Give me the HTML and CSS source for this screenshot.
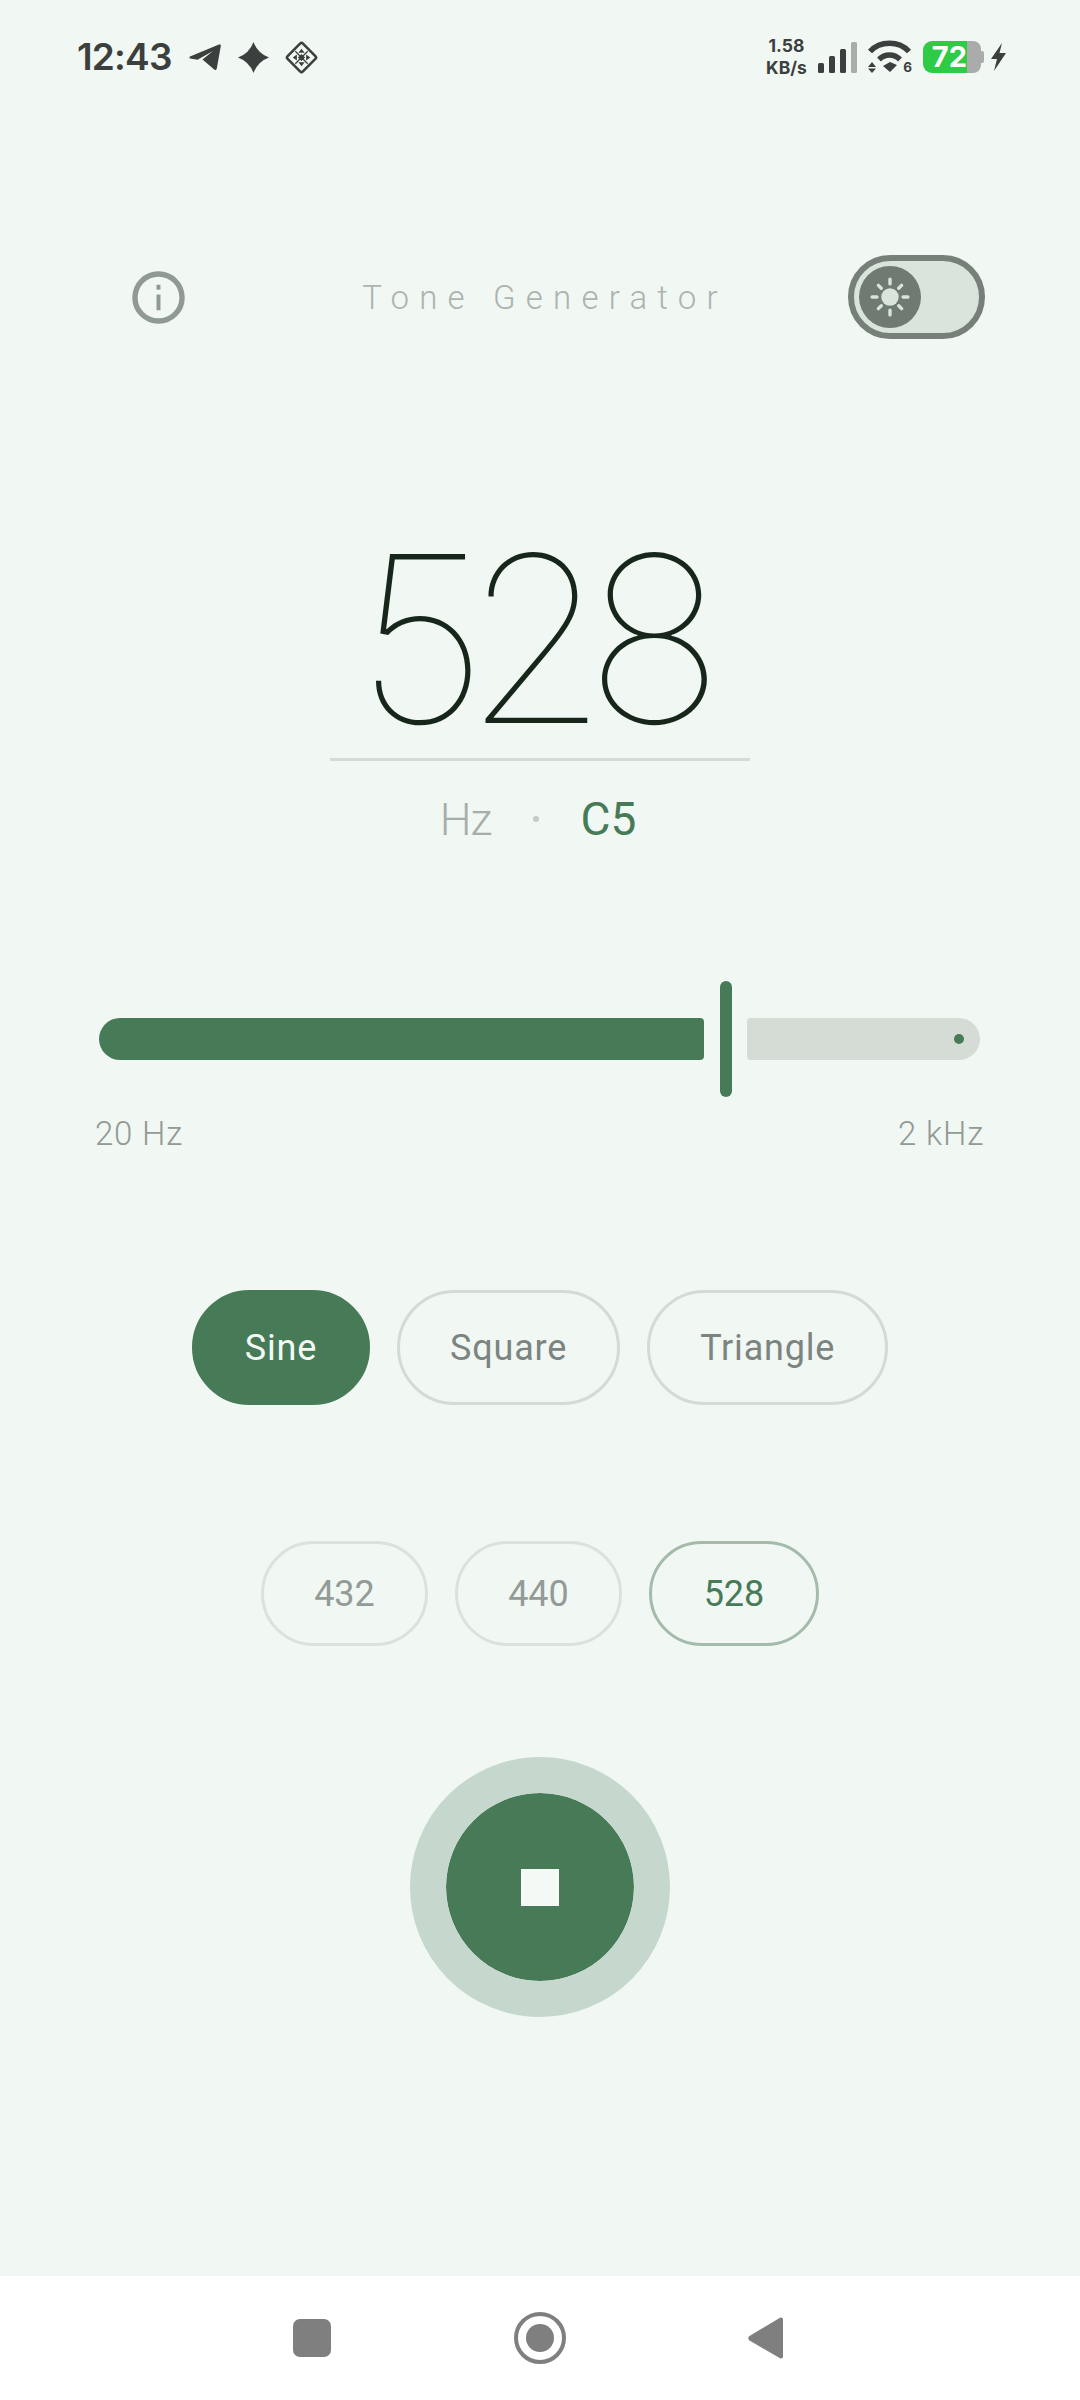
FILE: index.html
```html
<!DOCTYPE html>
<html lang="en">
<head>
<meta charset="utf-8">
<title>Tone Generator</title>
<link rel="stylesheet" href="styles.css">
</head>
<body>
<div class="screen">
  <header class="status">
    <div class="status-left">
      <span class="time">12:43</span>
      <svg class="ic-plane" viewBox="0 0 32 26"><path d="M1 12.500 30 .6c1.200-.5 2 .2 1.800 1.400L27.800 24.500c-.3 1.500-1.500 1.800-2.600.9L13.500 15.500 24 7 8.500 15.800 1.200 14.500c-.9-.2-1-1.500-.2-2Z"/></svg>
      <svg class="ic-star" viewBox="0 0 30 30"><path d="M15 0Q19 11 30 15 19 19 15 30 11 19 0 15 11 11 15 0Z"/></svg>
      <svg class="ic-diamond" viewBox="0 0 32 32"><rect x="5.500" y="5.500" width="21" height="21" rx="2" transform="rotate(45 16 16)" class="dia-line"/><path d="M16 7.500l3 4h-6ZM16 24.500l-3-4h6ZM7.500 16l4-3v6ZM24.500 16l-4 3v-6ZM16 12.500l3.500 3.500-3.500 3.500-3.500-3.500Z"/><path class="dia-thin" d="M10 10l12 12M22 10 10 22"/></svg>
    </div>
    <div class="status-right">
      <div class="speed"><span>1.58</span><span>KB/s</span></div>
      <div class="signal"><i class="b1"></i><i class="b2"></i><i class="b3"></i><i class="b4"></i></div>
      <div class="wifi">
        <svg viewBox="0 0 44 32"><path class="wifi-arc" d="M2 10.500C12 -.5 31 -.5 41 10.500"/><path class="wifi-arc" d="M11 18.500C17 12.500 26 12.500 32 18.500"/><path d="M15 25 22 21l7 3-7 7ZM0 26l4-5 4 5ZM0 27.500h8l-4 4.500Z"/></svg>
        <span class="wifi-six">6</span>
      </div>
      <div class="battery"><span class="bat-fill">72</span><span class="bat-rest"></span><span class="bat-nub"></span></div>
      <svg class="ic-bolt" viewBox="0 0 15 28"><path d="M11 0 0 16h6L3 28 15 10H8.500Z"/></svg>
    </div>
  </header>

  <main class="main">
    <section class="topbar">
      <svg class="ic-info" viewBox="0 0 54 54"><circle cx="27" cy="27" r="24" class="info-ring"/><rect x="25" y="14" width="4" height="5"/><rect x="25" y="24" width="4" height="16"/></svg>
      <h1 class="title">Tone Generator</h1>
      <div class="toggle">
        <div class="thumb">
          <svg viewBox="0 0 64 64" class="ic-sun"><circle cx="32" cy="32" r="9"/><g class="rays"><path d="M32 13.500v5M32 45.500v5M13.500 32h5M45.500 32h5M20 20l3 3M44 20l-3 3M20 44l3-3M44 44l-3-3"/></g></svg>
        </div>
      </div>
    </section>

    <section class="readout">
      <div class="freq">528</div>
      <div class="rule"></div>
      <div class="unit-row"><span class="unit">Hz</span><span class="dot"></span><span class="note">C5</span></div>
    </section>

    <section class="slider">
      <div class="track">
        <div class="fill"></div>
        <div class="handle"></div>
        <div class="rest"><span class="stop"></span></div>
      </div>
      <div class="range"><span>20 Hz</span><span>2 kHz</span></div>
    </section>

    <section class="waves">
      <button class="chip chip-on">Sine</button>
      <button class="chip">Square</button>
      <button class="chip">Triangle</button>
    </section>

    <section class="presets">
      <button class="preset">432</button>
      <button class="preset">440</button>
      <button class="preset preset-on">528</button>
    </section>

    <section class="play">
      <button class="stop-btn" aria-label="Stop"><span class="stop-sq"></span></button>
    </section>
  </main>

  <nav class="navbar">
    <span class="nav-square"></span>
    <span class="nav-home"><span></span></span>
    <svg class="nav-back" viewBox="0 0 36 42"><path d="M1.500 19 32 .8c1.500-.8 3 0 3 1.700v37c0 1.700-1.500 2.500-3 1.700L1.500 23.500c-1.600-1-1.600-3.500 0-4.500Z"/></svg>
  </nav>
</div>
</body>
</html>
```
FILE: styles.css
```css
* { box-sizing: border-box; }
html, body { margin: 0; padding: 0; }
body { background: #f1f7f3; font-family: "Roboto", "Liberation Sans", sans-serif; }
button { font-family: inherit; background: none; padding: 0; margin: 0; }

.screen { width: 1080px; height: 2400px; display: flex; flex-direction: column; overflow: hidden; }

/* status bar */
.status { height: 114px; flex: none; display: flex; align-items: center; justify-content: space-between; padding: 0 74px 0 77px; color: #3b3f3d; }
.status-left { display: flex; align-items: center; }
.status-left svg { fill: #3b3f3d; display: block; }
.time { font-family: "Inter", sans-serif; font-size: 37px; font-weight: 600; line-height: 44px; width: 112px; letter-spacing: -.8px; }
.ic-plane { width: 32px; height: 26px; }
.ic-star { width: 31px; height: 31px; margin-left: 17px; }
.ic-diamond { width: 33px; height: 33px; margin-left: 16px; }
.dia-line { fill: none; stroke: #3b3f3d; stroke-width: 2.500; }
.dia-thin { fill: none; stroke: #3b3f3d; stroke-width: 1.200; }
.status-right { display: flex; align-items: center; }
.speed { display: flex; flex-direction: column; align-items: center; font-family: "Inter", sans-serif; font-weight: 700; font-size: 17.500px; line-height: 22px; width: 42px; margin-left: -2px; }
.signal { display: flex; align-items: flex-end; gap: 4.500px; height: 31px; margin-left: 10px; }
.signal i { width: 6.500px; background: #3b3f3d; border-radius: 1.500px; display: block; }
.signal .b1 { height: 10px; }
.signal .b2 { height: 17px; }
.signal .b3 { height: 24px; }
.signal .b4 { height: 31px; background: #a9acaa; }
.wifi { position: relative; width: 44px; height: 32px; margin-left: 11px; }
.wifi svg { width: 44px; height: 32px; display: block; fill: #3b3f3d; overflow: visible; }
.wifi-arc { fill: none; stroke: #3b3f3d; stroke-width: 5.500; }
.wifi-six { position: absolute; right: 0; bottom: -1px; font-family: "Inter", sans-serif; font-size: 13.500px; font-weight: 700; line-height: 13px; }
.battery { display: flex; align-items: center; height: 32px; margin-left: 11px; }
.bat-fill { width: 44px; height: 32px; background: #2ecb47; color: #fff; border-radius: 9px 0 0 9px; font-family: "Inter", sans-serif; font-weight: 700; font-size: 29px; line-height: 32px; text-align: right; }
.bat-rest { width: 14px; height: 32px; background: #a9acaa; border-radius: 0 8px 8px 0; }
.bat-nub { width: 3px; height: 12px; background: #a9acaa; border-radius: 0 2px 2px 0; }
.ic-bolt { width: 15px; height: 28px; margin-left: 7px; fill: #3b3f3d; display: block; }

/* main */
.main { flex: 1; display: flex; flex-direction: column; align-items: center; }

.topbar { width: 100%; margin-top: 141px; padding: 0 95px; display: grid; grid-template-columns: 1fr auto 1fr; align-items: center; }
.ic-info { width: 53px; height: 53px; margin-left: 37px; display: block; fill: #8e9a92; }
.info-ring { fill: none; stroke: #8e9a92; stroke-width: 5.500; }
.title { margin: 2px 0 0; padding-left: 10px; font-family: "Roboto", sans-serif; font-weight: 300; font-size: 33px; line-height: 40px; letter-spacing: 10.200px; color: #acb4ae; }
.toggle { justify-self: end; width: 137px; height: 84px; border: 6px solid #768078; border-radius: 42px; background: #d8e4dc; padding: 5px; }
.thumb { width: 62px; height: 62px; border-radius: 50%; background: #6f7b72; }
.ic-sun { display: block; width: 62px; height: 62px; fill: #d8e4dc; }
.rays path { fill: none; stroke: #d8e4dc; stroke-width: 3.500; stroke-linecap: round; }

.readout { display: flex; flex-direction: column; align-items: center; margin-top: 180px; }
.freq { font-family: "Inter", sans-serif; font-weight: 100; font-size: 232px; line-height: 240px; color: #17261b; letter-spacing: -23px; padding-right: 23px; }
.rule { width: 420px; height: 3px; background: #d3dbd6; margin-top: -1px; }
.unit-row { display: flex; align-items: center; height: 60px; margin-top: 28px; padding-right: 4px; }
.unit { font-size: 45px; letter-spacing: -1px; color: #a6aeaa; font-weight: 300; }
.dot { width: 6px; height: 6px; border-radius: 50%; background: #c5ccc8; margin: 0 41px 0 42px; }
.note { font-weight: 400; font-size: 46px; color: #477b57; }

.slider { width: 100%; margin-top: 132px; display: flex; flex-direction: column; }
.track { display: flex; align-items: center; height: 116px; padding-left: 99px; }
.fill { width: 605px; height: 42px; background: #477b57; border-radius: 21px 4px 4px 21px; }
.handle { width: 12px; height: 116px; background: #477b57; border-radius: 6px; margin-left: 16px; }
.rest { width: 233px; height: 42px; margin-left: 15px; background: #d5dcd6; border-radius: 4px 21px 21px 4px; display: flex; align-items: center; justify-content: flex-end; padding-right: 16px; }
.stop { width: 10px; height: 10px; background: #477b57; border-radius: 50%; }
.range { display: flex; justify-content: space-between; margin-top: 17px; padding: 0 96px 0 95px; font-weight: 300; font-size: 33px; letter-spacing: .8px; line-height: 40px; color: #929a95; }

.waves { display: flex; gap: 27px; margin-top: 136px; }
.chip { height: 115px; border-radius: 58px; border: 3px solid #d3dbd6; padding: 0 50px; font-size: 36px; letter-spacing: .8px; color: #7b8480; }
.chip-on { background: #477b57; border-color: #477b57; color: #f4f9f6; }

.presets { display: flex; gap: 27px; margin-top: 136px; }
.preset { width: 167px; height: 105px; border-radius: 53px; border: 3px solid #dbe2dd; font-size: 36px; color: #939b97; }
.preset-on { width: 170px; border-color: #a4bbab; color: #477b57; }

.play { margin-top: 111px; }
.stop-btn { width: 260px; height: 260px; border-radius: 50%; border: 36px solid #c6d8cd; background: #477b57; background-clip: padding-box; display: flex; align-items: center; justify-content: center; }
.stop-sq { width: 38px; height: 37px; background: #f4f9f6; display: block; }

/* nav */
.navbar { height: 124px; flex: none; background: #fff; display: flex; align-items: center; padding: 0 0 0 293px; }
.nav-square { width: 38px; height: 38px; background: #7f7f7f; border-radius: 7px; }
.nav-home { width: 52px; height: 52px; margin-left: 183px; border: 4.500px solid #7f7f7f; border-radius: 50%; display: flex; align-items: center; justify-content: center; }
.nav-home span { width: 28px; height: 28px; border-radius: 50%; background: #7f7f7f; display: block; }
.nav-back { width: 36px; height: 42px; margin-left: 182px; fill: #7f7f7f; display: block; }
```
